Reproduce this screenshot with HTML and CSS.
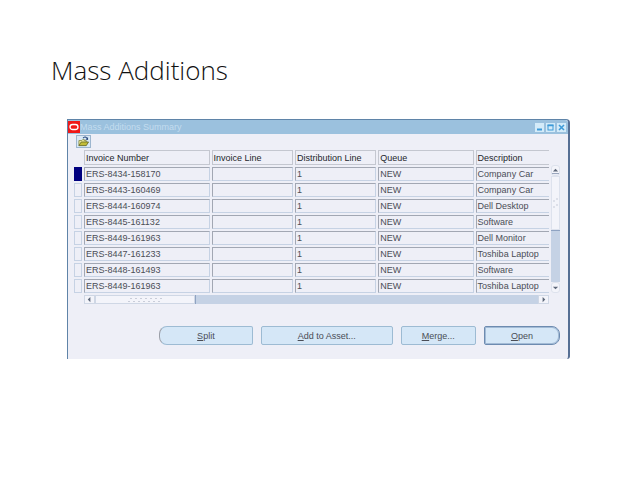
FILE: index.html
```
<!DOCTYPE html>
<html lang="en">
	<head>
		<meta charset="UTF-8" />
		<meta name="viewport" content="width=device-width, initial-scale=1.0" />
		<title>Mass Additions</title>
		<link rel="stylesheet" href="styles.css">
	</head>
	<body>
		<h1>Mass Additions</h1>

		<div class="window">
			<div class="titlebar">
				<svg class="logo" viewBox="0 0 12 12"><rect width="12" height="12" fill="#f01818"/><rect x="2" y="3.500" width="8" height="5" rx="2.500" fill="none" stroke="#fff" stroke-width="1.3"/></svg>
				<h2>Mass Additions Summary</h2>
				<div class="window-controls">
					<button type="button" aria-label="Minimize"><svg viewBox="0 0 9 9"><path d="M2 6.500h5" stroke="#3e9bd8" stroke-width="2"/></svg></button>
					<button type="button" aria-label="Maximize"><svg viewBox="0 0 9 9"><rect x="2" y="2" width="5" height="5" fill="none" stroke="#3e9bd8"/><path d="M1.500 2.500h6" stroke="#3e9bd8" stroke-width="1.500"/></svg></button>
					<button type="button" aria-label="Close"><svg viewBox="0 0 9 9"><path d="M2 2l5 5M7 2l-5 5" stroke="#3e9bd8" stroke-width="1.6"/></svg></button>
				</div>
			</div>

			<div class="toolbar">
				<button type="button" class="tool" aria-label="Open folder"><svg viewBox="0 0 12 12"><path d="M1 10.500V5h3l1-1h2v1h2v2" fill="#f4f0a0" stroke="#777a30" stroke-width=".8"/><path d="M1 10.500l2.500-4H11.500l-2.500 4z" fill="#c3bd38" stroke="#55591c" stroke-width=".8"/><path d="M5.500 2.500C6.500 .8 8.500 .6 9.500 2.300" fill="none" stroke="#26467c" stroke-width="1.100"/><path d="M8 3.800l3 .5V1z" fill="#26467c"/></svg></button>
			</div>

			<div class="records">
				<table>
					<colgroup>
						<col class="col-mark">
						<col class="col-invoice">
						<col class="col-line">
						<col class="col-line">
						<col class="col-queue">
						<col class="col-description">
					</colgroup>
					<thead>
						<tr><td></td><th>Invoice Number</th><th>Invoice Line</th><th>Distribution Line</th><th>Queue</th><th class="cut">Description</th></tr>
					</thead>
					<tbody>
						<tr><td class="mark current"></td><td>ERS-8434-158170</td><td></td><td>1</td><td>NEW</td><td class="cut">Company Car</td></tr>
						<tr><td class="mark"></td><td>ERS-8443-160469</td><td></td><td>1</td><td>NEW</td><td class="cut">Company Car</td></tr>
						<tr><td class="mark"></td><td>ERS-8444-160974</td><td></td><td>1</td><td>NEW</td><td class="cut">Dell Desktop</td></tr>
						<tr><td class="mark"></td><td>ERS-8445-161132</td><td></td><td>1</td><td>NEW</td><td class="cut">Software</td></tr>
						<tr><td class="mark"></td><td>ERS-8449-161963</td><td></td><td>1</td><td>NEW</td><td class="cut">Dell Monitor</td></tr>
						<tr><td class="mark"></td><td>ERS-8447-161233</td><td></td><td>1</td><td>NEW</td><td class="cut">Toshiba Laptop</td></tr>
						<tr><td class="mark"></td><td>ERS-8448-161493</td><td></td><td>1</td><td>NEW</td><td class="cut">Software</td></tr>
						<tr><td class="mark"></td><td>ERS-8449-161963</td><td></td><td>1</td><td>NEW</td><td class="cut">Toshiba Laptop</td></tr>
					</tbody>
				</table>
				<div class="vscroll">
					<button type="button" aria-label="Scroll up"><svg viewBox="0 0 8 10"><path d="M1 6l3-3 3 3z" fill="#5c6678"/><path d="M0 8.500h8" stroke="#8796b0"/></svg></button>
					<div class="vthumb"><svg viewBox="0 0 6 12"><path d="M3 2h2M0 4h2M3 8h2M0 10h2" stroke="#c6cbd8"/></svg></div>
					<div class="vtrack"></div>
					<button type="button" aria-label="Scroll down"><svg viewBox="0 0 8 10"><path d="M1 4l3 3 3-3z" fill="#5c6678"/></svg></button>
				</div>
			</div>

			<div class="hscroll">
				<button type="button" aria-label="Scroll left"><svg viewBox="0 0 10 8"><path d="M6 1L3 4l3 3z" fill="#5c6678"/></svg></button>
				<div class="hthumb"><svg viewBox="0 0 36 6"><path d="M3 1.500h2M8 1.500h2M13 1.500h2M18 1.500h2M23 1.500h2M28 1.500h2M33 1.500h2M1 4.500h2M6 4.500h2M11 4.500h2M16 4.500h2M21 4.500h2M26 4.500h2M31 4.500h2" stroke="#c9cdd9"/></svg></div>
				<div class="htrack"></div>
				<button type="button" aria-label="Scroll right"><svg viewBox="0 0 10 8"><path d="M4 1l3 3-3 3z" fill="#5c6678"/></svg></button>
			</div>

			<div class="actions">
				<button type="button" class="split"><u>S</u>plit</button>
				<button type="button" class="add"><u>A</u>dd to Asset...</button>
				<button type="button" class="merge"><u>M</u>erge...</button>
				<button type="button" class="open"><u>O</u>pen</button>
			</div>
		</div>
	</body>
</html>
```
FILE: styles.css
```
body {
	margin: 0;
	padding: 52px 68px 20px 67px;
	background: #fff;
	color: #4a4d56;
	font-family: "Liberation Sans", Arial, sans-serif;
	font-size: 9px;
	line-height: 12px;
}

h1 {
	margin: 0 -16px 31px;
	color: #111;
	font-family: "Open Sans", sans-serif;
	font-size: 26px;
	font-weight: 300;
	line-height: 36px;
}

button {
	padding: 0;
	border: none;
	color: inherit;
	font: inherit;
	cursor: pointer;
}

svg {
	display: block;
}

.window {
	border: 1px solid #5f84a8;
	border-right: 2px solid #566f94;
	border-bottom: none;
	border-radius: 0 4px 3px 0;
	background: #eeeff7;
}

.titlebar {
	display: flex;
	align-items: center;
	height: 14px;
	padding-right: 2px;
	border-radius: 0 3px 0 0;
	background: #9bc1de;
}

.logo {
	width: 12px;
	height: 12px;
}

.titlebar h2 {
	flex: 1;
	margin: 0;
	color: #c3dcee;
	font-size: 9px;
	font-weight: normal;
}

.window-controls {
	display: flex;
	gap: 2px;
}

.window-controls button {
	width: 9px;
	height: 9px;
	background: #d3ebf9;
}

.window-controls svg {
	width: 9px;
	height: 9px;
}

.toolbar {
	padding: 1px 8px 0;
}

.tool {
	display: block;
	width: 15px;
	height: 13px;
	border: 1px solid #9db6cf;
	background: #d9e9f6;
}

.tool svg {
	width: 13px;
	height: 11px;
}

.records {
	display: flex;
	padding: 0 8px 0 4px;
}

table {
	flex: 1;
	width: 100%;
	table-layout: fixed;
	border-spacing: 2px;
}

.col-mark {
	width: 8px;
}

.col-invoice {
	width: 27%;
}

.col-line {
	width: 17.5%;
}

.col-queue {
	width: 20.5%;
}

th,
td {
	box-sizing: border-box;
	height: 14px;
	padding: 0 1px;
	overflow: hidden;
	text-align: left;
	font-weight: normal;
	line-height: 12px;
	white-space: nowrap;
}

th {
	height: 15px;
	border: 1px solid #c4c7d0;
	color: #23252b;
}

tbody td {
	border: 1px solid #c6d2e4;
	border-top-color: #a2a7b3;
	border-left-color: #a2a7b3;
}

th.cut,
td.cut {
	border-right: none;
}

tbody .mark {
	border-color: #c6d2e4;
}

tbody .current {
	border-color: #00007f;
	background: #00007f;
}

.vscroll {
	display: flex;
	flex-direction: column;
	width: 9px;
	padding: 17px 0 2px;
}

.vscroll button {
	height: 11px;
	border: 1px solid #dde2ed;
	border-radius: 3px;
	background: #f3f4fa;
}

.vscroll button svg {
	width: 7px;
	height: 9px;
}

.vthumb {
	display: flex;
	flex: 1;
	align-items: center;
	justify-content: center;
	border: 1px solid #dde2ed;
	background: #f3f4fa;
}

.vthumb svg {
	width: 6px;
	height: 12px;
}

.vtrack {
	flex: 1;
	border-top: 1px solid #8fa3c2;
	background: #c5d2e5;
}

.hscroll {
	display: flex;
	height: 9px;
	margin: 0 19px 0 16px;
}

.hscroll button {
	box-sizing: border-box;
	width: 11px;
	border: 1px solid #cfd7e5;
	background: #f3f4fa;
}

.hscroll button svg {
	width: 9px;
	height: 7px;
}

.hthumb {
	display: flex;
	flex: 2;
	align-items: center;
	justify-content: center;
	border: 1px solid #cfd7e5;
	background: #f3f4fa;
}

.hthumb svg {
	width: 36px;
	height: 6px;
}

.htrack {
	flex: 7;
	border-left: 1px solid #8fa3c2;
	background: #c5d2e5;
}

.actions {
	display: flex;
	gap: 8px;
	padding: 22px 8px 14px 91px;
}

.actions button {
	height: 19px;
	border: 1px solid #9dbbd3;
	border-radius: 2px;
	background: #d5e7f7;
}

.actions .split {
	flex: 94;
	border-left-color: #9b9fa8;
	border-radius: 8px 2px 2px 8px;
}

.actions .add {
	flex: 133;
}

.actions .merge {
	flex: 75;
}

.actions .open {
	flex: 76;
	border: 1px solid #6d8bb0;
	border-radius: 2px 8px 8px 2px;
	box-shadow: inset 0 0 0 1px #a3bbd6;
}
```
